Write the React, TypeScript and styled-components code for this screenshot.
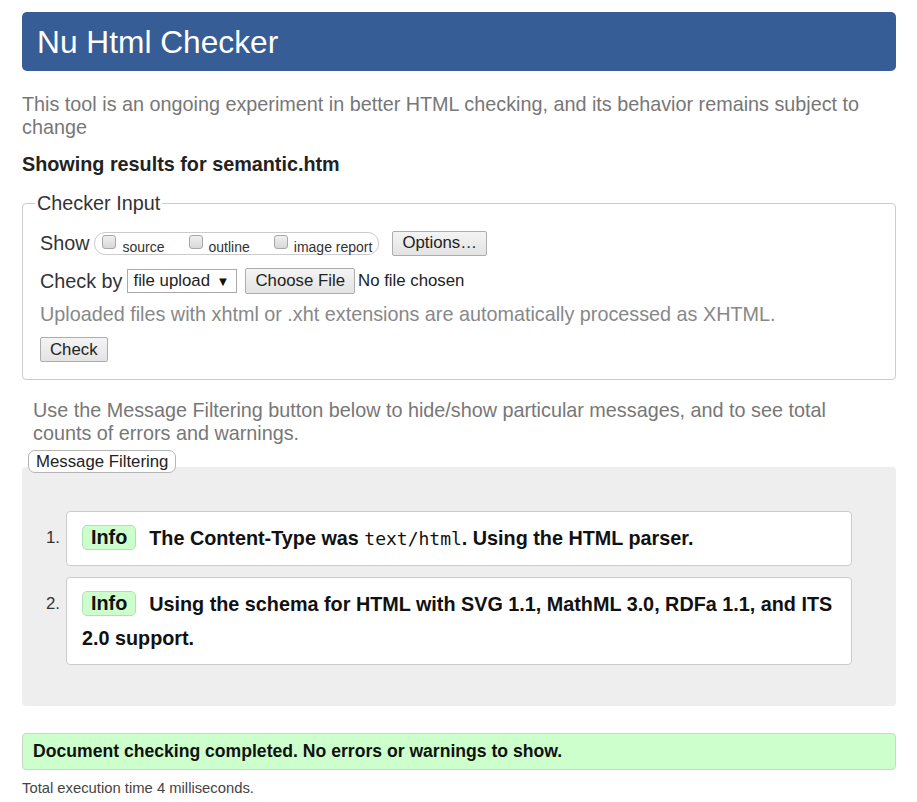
import * as React from "react";
import styled, { createGlobalStyle } from "styled-components";

const GlobalStyle = createGlobalStyle`
  html, body {
    margin: 0;
    padding: 0;
    background: #fff;
  }
  body {
    font-family: "Liberation Sans", Arial, sans-serif;
    color: #333;
  }
`;

const Page = styled.div`
  padding: 12px 21px 20px 22px;
`;

const Header = styled.h1`
  margin: 0;
  height: 59px;
  line-height: 61px;
  padding-left: 15px;
  background: #365d95;
  color: #fff;
  border-radius: 5px;
  font-size: 31.7px;
  font-weight: normal;
`;

const Intro = styled.p<{ $indent?: number; $top: number }>`
  margin: ${(p) => p.$top}px 0 0;
  padding-left: ${(p) => p.$indent || 0}px;
  padding-right: ${(p) => (p.$indent ? 50 : 0)}px;
  font-size: 19.8px;
  line-height: 23px;
  color: #777;
`;

const Showing = styled.h2`
  margin: 14px 0 0;
  font-size: 19.8px;
  line-height: 23px;
  color: #222;
`;

const Fieldset = styled.fieldset`
  margin: 16px 0 0;
  padding: 0 17px 17px;
  border: 1px solid #ccc;
  border-radius: 4px;
`;

const Legend = styled.legend`
  padding: 0 2px;
  margin-left: -5px;
  font-size: 19.8px;
  line-height: 23px;
  color: #333;
`;

const Row = styled.div<{ $top: number }>`
  display: flex;
  align-items: center;
  height: 26px;
  margin-top: ${(p) => p.$top}px;
  font-size: 19.8px;
  color: #333;
`;

const Label = styled.span`
  margin-right: 5px;
`;

const Pill = styled.span`
  display: inline-flex;
  align-items: flex-start;
  box-sizing: border-box;
  height: 23px;
  padding: 2px 6px 0 7px;
  border: 1px solid #ccc;
  border-radius: 11px;
  margin-right: 13px;
`;

const Option = styled.label`
  display: inline-flex;
  align-items: flex-start;
  font-size: 14px;
  line-height: 14px;
  color: #333;
  margin-right: 24px;

  &:last-child {
    margin-right: 0;
  }

  span {
    margin-top: 5px;
  }
`;

const Box = styled.i`
  display: inline-block;
  box-sizing: border-box;
  width: 14px;
  height: 14px;
  margin-right: 6px;
  border: 1px solid #a8a8a8;
  border-radius: 3px;
  background: linear-gradient(#f0f0f0, #d8d8d8);
`;

const Button = styled.button<{ $h?: number }>`
  box-sizing: border-box;
  height: ${(p) => p.$h || 26}px;
  padding: 0 9px;
  border: 1px solid #adadad;
  border-radius: 2px;
  background: linear-gradient(#f4f4f4, #e3e3e3);
  font-family: "Liberation Sans", Arial, sans-serif;
  font-size: 16.8px;
  color: #222;
  cursor: pointer;
`;

const Select = styled.span`
  display: inline-flex;
  align-items: center;
  justify-content: space-between;
  box-sizing: border-box;
  height: 24px;
  width: 110px;
  padding: 0 7px 0 5px;
  margin-right: 8px;
  border: 1px solid #aaa;
  background: #fff;
  font-size: 16.8px;
  color: #222;

  b {
    font-size: 13px;
    font-weight: normal;
    color: #111;
  }
`;

const NoFile = styled.span`
  margin-left: 3px;
  font-size: 16.8px;
  color: #222;
`;

const Hint = styled.p`
  margin: 9px 0 0;
  font-size: 19.8px;
  line-height: 23px;
  color: #888;
`;

const CheckRow = styled.div`
  margin-top: 11px;
`;

const FilterButton = styled.button`
  position: relative;
  z-index: 1;
  display: block;
  box-sizing: border-box;
  height: 23px;
  margin: 5px 0 -6px 6px;
  padding: 0 7px;
  border: 1px solid #b5b5b5;
  border-radius: 7px;
  background: #fff;
  font-family: "Liberation Sans", Arial, sans-serif;
  font-size: 16.8px;
  color: #222;
`;

const Results = styled.ol`
  margin: 0;
  padding: 44px 44px 41px 0;
  list-style: none;
  background: #eee;
  border-radius: 4px;
  display: flex;
  flex-direction: column;
  gap: 11px;
`;

const Item = styled.li`
  display: flex;
  align-items: flex-start;
`;

const Num = styled.span`
  flex: 0 0 44px;
  box-sizing: border-box;
  padding: 10px 6px 0 0;
  text-align: right;
  font-size: 16.8px;
  line-height: 34px;
  color: #333;
`;

const Card = styled.div`
  flex: 1;
  padding: 9px 15px;
  background: #fff;
  border: 1px solid #ccc;
  border-radius: 4px;
  font-size: 19.8px;
  font-weight: bold;
  line-height: 34px;
  color: #111;
`;

const Badge = styled.strong`
  display: inline-block;
  box-sizing: border-box;
  height: 25px;
  line-height: 23px;
  vertical-align: 1px;
  padding: 0 8px;
  margin-right: 13px;
  background: #ccffcc;
  border: 1px solid #b4deb4;
  border-radius: 5px;
  color: #111;
`;

const Code = styled.code`
  font-family: "DejaVu Sans Mono", "Liberation Mono", monospace;
  font-weight: normal;
  font-size: 18px;
`;

const Success = styled.p`
  margin: 27px 0 0;
  box-sizing: border-box;
  height: 37px;
  line-height: 35px;
  padding-left: 10px;
  background: #ccffcc;
  border: 1px solid #c8d8c8;
  border-radius: 4px;
  font-size: 17.6px;
  font-weight: bold;
  color: #111;
`;

const Footer = styled.p`
  margin: 9px 0 0;
  font-size: 14.8px;
  line-height: 18px;
  color: #444;
`;

const options = ["source", "outline", "image report"];

export default function App() {
  return (
    <Page>
      <GlobalStyle />
      <Header>Nu Html Checker</Header>
      <Intro $top={22}>
        This tool is an ongoing experiment in better HTML checking, and its
        behavior remains subject to change
      </Intro>
      <Showing>Showing results for semantic.htm</Showing>

      <Fieldset>
        <Legend>Checker Input</Legend>
        <Row $top={15}>
          <Label>Show</Label>
          <Pill>
            {options.map((o) => (
              <Option key={o}>
                <Box />
                <span>{o}</span>
              </Option>
            ))}
          </Pill>
          <Button $h={25}>Options…</Button>
        </Row>
        <Row $top={12}>
          <Label>Check by</Label>
          <Select>
            file upload <b>▼</b>
          </Select>
          <Button>Choose File</Button>
          <NoFile>No file chosen</NoFile>
        </Row>
        <Hint>
          Uploaded files with xhtml or .xht extensions are automatically
          processed as XHTML.
        </Hint>
        <CheckRow>
          <Button $h={25}>Check</Button>
        </CheckRow>
      </Fieldset>

      <Intro $top={19} $indent={11}>
        Use the Message Filtering button below to hide/show particular
        messages, and to see total counts of errors and warnings.
      </Intro>
      <FilterButton>Message Filtering</FilterButton>
      <Results>
        <Item>
          <Num>1.</Num>
          <Card>
            <Badge>Info</Badge>
            The Content-Type was <Code>text/html</Code>. Using the HTML parser.
          </Card>
        </Item>
        <Item>
          <Num>2.</Num>
          <Card>
            <Badge>Info</Badge>
            Using the schema for HTML with SVG 1.1, MathML 3.0, RDFa 1.1, and
            ITS 2.0 support.
          </Card>
        </Item>
      </Results>

      <Success>
        Document checking completed. No errors or warnings to show.
      </Success>
      <Footer>Total execution time 4 milliseconds.</Footer>
    </Page>
  );
}
